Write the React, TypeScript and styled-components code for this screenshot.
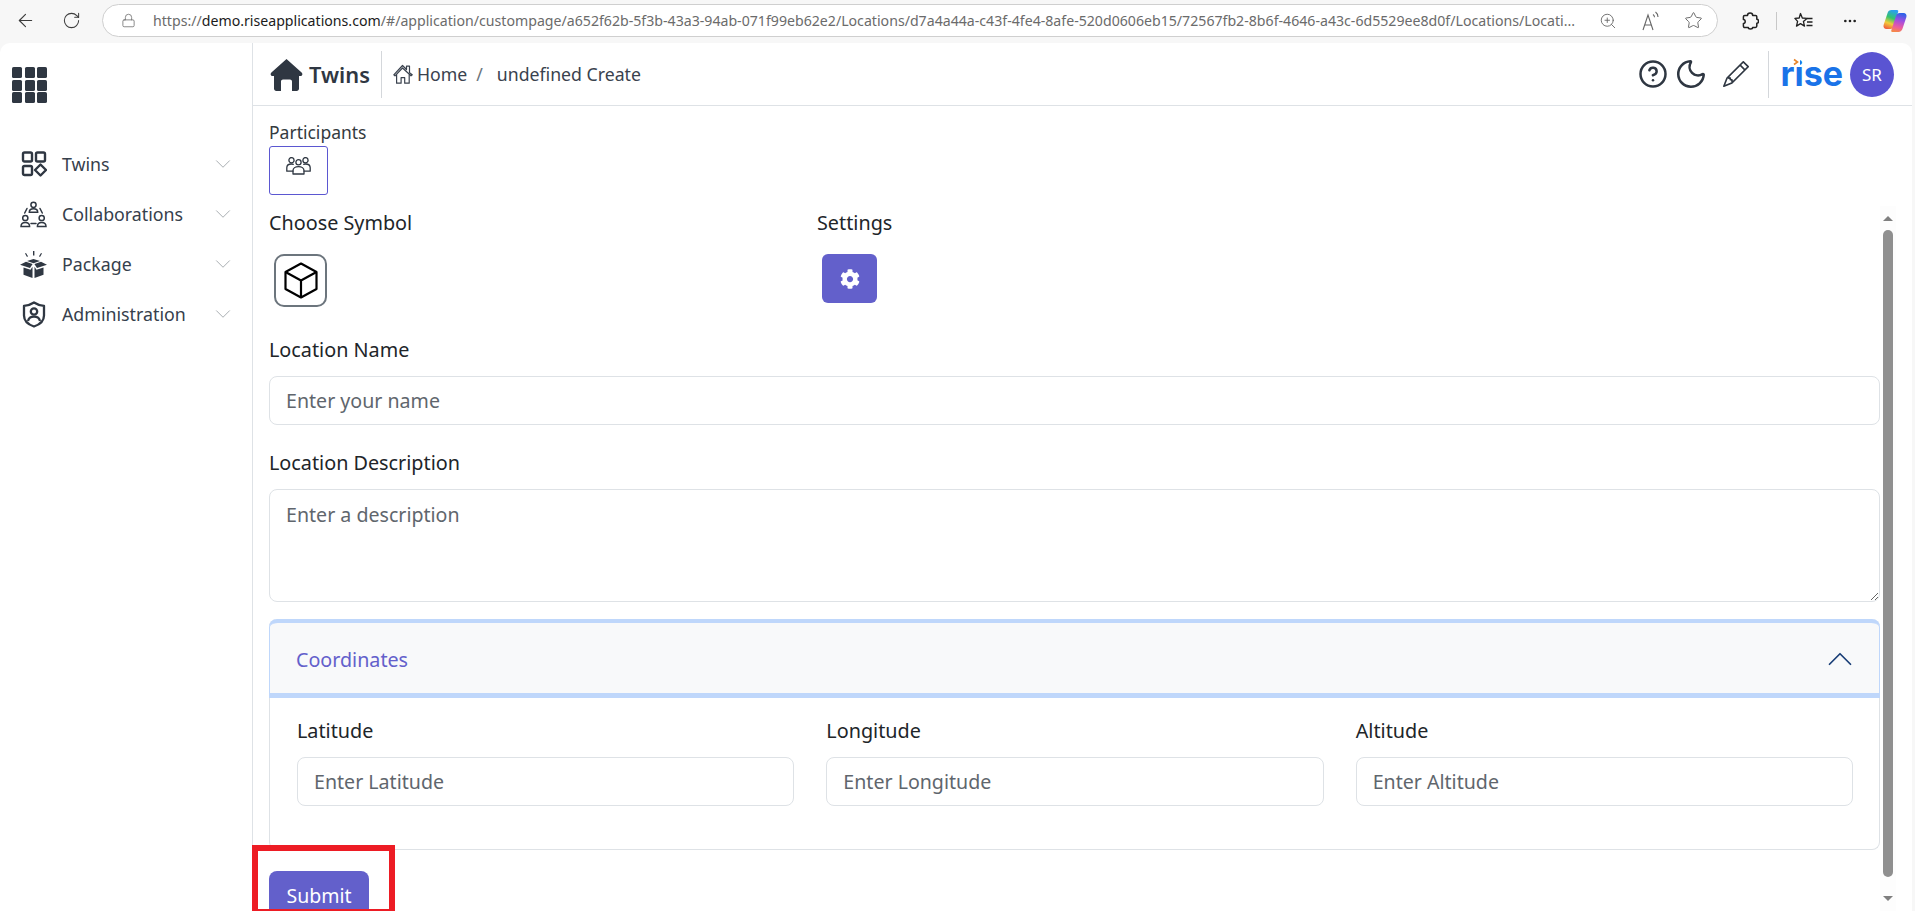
import styled, { createGlobalStyle } from "styled-components"
import { ArrowLeft, RotateCw, Lock, ZoomIn, Star, MoreHorizontal, CircleHelp, Moon, ChevronDown, ChevronUp } from "lucide-react"
import { BsPencil } from "react-icons/bs"
import { FaCog } from "react-icons/fa"

const UI_FONT = `"Noto Sans", "Open Sans", sans-serif`
const DARK = "#2f3742"
const PURPLE = "#6360cb"
const LINE = "#dee2e6"

const GlobalStyle = createGlobalStyle`
    html, body, #root {
        margin: 0;
        height: 100%;
        overflow: hidden;
    }
    body {
        background: #f7f7f7;
        font-family: ${UI_FONT};
        color: #212529;
    }
    * { box-sizing: border-box; }
`

const Page = styled.div`
    position: relative;
    height: 100vh;
    display: flex;
    flex-direction: column;
    overflow: hidden;
`

/* browser toolbar */
const BrowserBar = styled.div`
    height: 43px;
    flex: none;
    display: flex;
    align-items: flex-start;
    padding-top: 4px;
`

const NavButtons = styled.div`
    width: 102px;
    height: 33px;
    flex: none;
    display: flex;
    align-items: center;
    gap: 26px;
    padding-left: 15px;
    color: #3c3c3c;
`

const AddressBar = styled.div`
    flex: 1;
    min-width: 0;
    height: 33px;
    display: flex;
    align-items: center;
    padding: 0 14px 0 18px;
    background: #fff;
    border: 1px solid #cfcfcf;
    border-radius: 17px;
    color: #666;
`

const Url = styled.div`
    flex: 1;
    margin-left: 17px;
    font-size: 14.15px;
    white-space: nowrap;
    overflow: hidden;
    color: #6b6b6b;
    b { font-weight: 400; color: #1b1b1b; }
`

const AddressIcons = styled.div`
    display: flex;
    align-items: center;
    gap: 25px;
`

const Tools = styled.div`
    width: 197px;
    height: 33px;
    flex: none;
    display: flex;
    align-items: center;
    padding-left: 24px;
    color: #222;
`

const ToolDivider = styled.div`
    width: 1px;
    height: 18px;
    margin: 0 17px;
    background: #c8c8c8;
`

const ToolGap = styled.div<{ $w: number }>`
    width: ${({ $w }) => $w}px;
`

/* app panel */
const Panel = styled.div`
    flex: 1;
    min-height: 0;
    display: flex;
    margin-right: 3px;
    background: #fff;
    border-radius: 10px 10px 0 0;
    overflow: hidden;
`

const Sidebar = styled.aside`
    width: 253px;
    flex: none;
    border-right: 1px solid ${LINE};
    padding: 24px 16px 0 0;
`

const Apps = styled.div`
    margin-left: 12px;
    height: 36px;
    color: ${DARK};
`

const Nav = styled.nav`
    margin-top: 36px;
`

const NavRow = styled.div`
    height: 50px;
    display: flex;
    align-items: center;
    padding-left: 20px;
    color: ${DARK};
`

const NavIcon = styled.div`
    width: 27px;
    height: 27px;
    flex: none;
    display: flex;
    align-items: center;
    justify-content: center;
`

const NavLabel = styled.span`
    flex: 1;
    margin-left: 15px;
    font-size: 17.8px;
    color: #36404c;
`

const Main = styled.main`
    flex: 1;
    min-width: 0;
    display: flex;
    flex-direction: column;
`

const Header = styled.header`
    height: 63px;
    flex: none;
    display: flex;
    align-items: center;
    padding: 0 18px 0 17px;
    border-bottom: 1px solid ${LINE};
`

const Brand = styled.div`
    display: flex;
    align-items: center;
    gap: 6px;
    height: 47px;
    padding-right: 11px;
    border-right: 1px solid #d4d7db;
    color: ${DARK};
    font-size: 21.8px;
    font-weight: 600;
`

const Crumbs = styled.div`
    flex: 1;
    display: flex;
    align-items: center;
    padding-left: 11px;
    font-size: 17.7px;
    color: #3a424e;
`

const CrumbHome = styled.span`
    margin-left: 4px;
`

const CrumbSep = styled.span`
    margin: 0 14px 0 9px;
    color: #6c757d;
`

const HeaderIcons = styled.div`
    display: flex;
    align-items: center;
    color: ${DARK};
`

const HelpSlot = styled.div`
    display: flex;
    margin-right: 6px;
`

const MoonSlot = styled.div`
    display: flex;
    margin-right: 15px;
`

const LogoArea = styled.div`
    display: flex;
    align-items: center;
    height: 47px;
    margin-left: 19px;
    padding-left: 11px;
    border-left: 1px solid #d4d7db;
`

const Logo = styled.div`
    position: relative;
    font-family: "Inter", sans-serif;
    font-size: 34px;
    font-weight: 700;
    color: #1a73e8;
    line-height: 1;
    margin-right: 7px;
`

const LogoDot = styled.svg`
    position: absolute;
    left: 12px;
    top: 1px;
    background: #fff;
`

const Avatar = styled.div`
    width: 44px;
    height: 45px;
    border-radius: 50%;
    background: #5a54d2;
    color: #fff;
    display: flex;
    align-items: center;
    justify-content: center;
    font-size: 17px;
`

const Participants = styled.section`
    height: 100px;
    flex: none;
    padding: 14px 0 0 16px;
`

const SmallLabel = styled.div`
    font-size: 17.5px;
    line-height: 25px;
    color: #343a40;
`

const PeopleBox = styled.div`
    width: 59px;
    height: 49px;
    margin-top: 1px;
    padding-bottom: 9px;
    display: flex;
    align-items: center;
    justify-content: center;
    border: 1px solid #5b57d1;
    border-radius: 3px;
    color: ${DARK};
`

const ScrollRow = styled.div`
    flex: 1;
    min-height: 0;
    display: flex;
    padding-right: 16px;
`

const FormArea = styled.div`
    flex: 1;
    min-width: 0;
    overflow: hidden;
    padding: 3px 0 0 16px;
`

const Lane = styled.div`
    width: 16px;
    flex: none;
    display: flex;
    flex-direction: column;
    align-items: center;
    background: #fdfdfd;
`

const Arrow = styled.div<{ $down?: boolean }>`
    flex: none;
    width: 0;
    height: 0;
    margin: ${({ $down }) => ($down ? "19px 0 0" : "10px 0 9px")};
    border-left: 5px solid transparent;
    border-right: 5px solid transparent;
    ${({ $down }) => ($down ? "border-top: 5px solid #7f7f7f;" : "border-bottom: 5px solid #7f7f7f;")}
`

const Thumb = styled.div`
    width: 10px;
    height: 647px;
    flex: none;
    border-radius: 5px;
    background: #8f8f8f;
`

const SymbolRow = styled.div`
    display: grid;
    grid-template-columns: 548px 1fr;
`

const FieldLabel = styled.label`
    display: block;
    font-size: 19.8px;
    line-height: 28px;
    color: #212529;
`

const SymbolSlot = styled.div`
    margin: 17px 0 0 5px;
`

const CubeBox = styled.div`
    width: 53px;
    height: 53px;
    display: flex;
    align-items: center;
    justify-content: center;
    border: 2px solid #6c757d;
    border-radius: 10px;
    color: #000;
`

const GearButton = styled.button`
    width: 55px;
    height: 49px;
    display: flex;
    align-items: center;
    justify-content: center;
    border: 0;
    border-radius: 6px;
    background: ${PURPLE};
    color: #fff;
`

const Field = styled.div<{ $top: number }>`
    margin-top: ${({ $top }) => $top}px;
`

const TextInput = styled.input`
    display: block;
    width: 100%;
    height: 49px;
    margin-top: 12px;
    padding: 0 16px;
    font-family: ${UI_FONT};
    font-size: 19.6px;
    color: #212529;
    background: #fff;
    border: 1px solid ${LINE};
    border-radius: 8px;
    outline: 0;
    &::placeholder { color: #5f666d; opacity: 1; }
`

const TextArea = styled.textarea`
    display: block;
    width: 100%;
    height: 113px;
    margin-top: 12px;
    padding: 11px 16px;
    font-family: ${UI_FONT};
    font-size: 19.6px;
    line-height: 27px;
    background: #fff;
    border: 1px solid ${LINE};
    border-radius: 8px;
    outline: 0;
    resize: vertical;
    &::placeholder { color: #5f666d; opacity: 1; }
`

const Accordion = styled.div`
    margin-top: 17px;
    border: 1px solid ${LINE};
    border-top: 0;
    border-radius: 8px;
`

const AccordionHead = styled.div`
    height: 79px;
    display: flex;
    align-items: center;
    justify-content: space-between;
    padding: 2px 19px 0 27px;
    background: #f8f9fa;
    border-top: 4px solid #bfd7fb;
    border-bottom: 5px solid #bfd7fb;
    box-shadow: inset 1px 0 #bfd7fb, inset -1px 0 #bfd7fb;
    border-radius: 8px 8px 0 0;
    margin: 0 -1px;
    font-size: 19.7px;
    color: ${PURPLE};
`

const AccordionBody = styled.div`
    display: grid;
    grid-template-columns: repeat(3, 1fr);
    gap: 32px;
    padding: 19px 26px 43px 27px;
`

const SubmitButton = styled.button`
    display: block;
    width: 100px;
    height: 49px;
    margin-top: 21px;
    border: 0;
    border-radius: 8px;
    background: ${PURPLE};
    color: #fff;
    font-family: ${UI_FONT};
    font-size: 19.5px;
`

const Annotation = styled.div`
    position: absolute;
    left: 252px;
    top: 845px;
    width: 143px;
    height: 70px;
    border: 6px solid #ed1c24;
    pointer-events: none;
`

function HomeSolid() {
    return (
        <svg width="33" height="33" viewBox="0 0 33 33" fill="currentColor">
            <path d="M16.5 1 31.6 14.6c1.500 1.400.6 3.400-1.200 3.400H29v12.500c0 1.400-1 2.500-2.400 2.500H22V23.500c0-1.200-.9-2-2-2h-7c-1.100 0-2 .8-2 2V33H6.400C5 33 4 31.900 4 30.500V18H2.600c-1.800 0-2.700-2-1.200-3.400z" />
        </svg>
    )
}

function HomeOutline() {
    return (
        <svg width="20" height="20" viewBox="0 0 20 20" fill="none" stroke="currentColor" strokeWidth="1.200" strokeLinejoin="round">
            <path d="M.8 10.800 9.500 1.500l4 4V2.200h3v6.400l2.700 2.200-1.200 1L9.500 4 2 11.800z" />
            <path d="M3.600 10.500v8.700h4.500v-5.500h3.600v5.500h4.500v-8.700" />
        </svg>
    )
}

function AppsIcon() {
    const cells = [0, 13, 25]
    return (
        <svg width="35" height="36" viewBox="0 0 35 36" fill="currentColor">
            {cells.map((y) => cells.map((x) => <rect key={`${x}-${y}`} x={x} y={y} width="10" height="11" rx="1.6" />))}
        </svg>
    )
}

function TwinsIcon() {
    return (
        <svg width="26" height="26" viewBox="0 0 26 26" fill="none" stroke="currentColor" strokeWidth="2.4" strokeLinejoin="round">
            <rect x="2" y="1.5" width="9" height="9" rx="1.5" />
            <rect x="15" y="1.5" width="9" height="9" rx="1.5" />
            <rect x="2" y="15" width="9" height="9" rx="1.5" />
            <path d="M19.5 13.500 25 19l-5.500 5.500L14 19z" />
        </svg>
    )
}

function CollabIcon() {
    return (
        <svg width="27" height="27" viewBox="0 0 27 27" fill="none" stroke="currentColor" strokeWidth="1.5" strokeLinecap="round">
            <circle cx="13.500" cy="3.800" r="2.600" />
            <path d="M9.300 11.200c0-2 1.800-3.400 4.200-3.400s4.200 1.400 4.200 3.400z" />
            <circle cx="5.300" cy="17" r="2.600" />
            <path d="M1 25.500c0-2.400 1.800-4 4.300-4s4.300 1.600 4.300 4z" />
            <circle cx="21.700" cy="17" r="2.600" />
            <path d="M17.400 25.500c0-2.400 1.800-4 4.300-4s4.300 1.600 4.300 4z" />
            <path d="M11 22.500h5M7 7.500l-2.300 4.500M20 7.500l2.300 4.500" />
        </svg>
    )
}

function PackageIcon() {
    return (
        <svg width="27" height="27" viewBox="0 0 27 27" fill="currentColor" stroke="none">
            <path d="M6 2l2 3.300-1 .6-2-3.300zM13 0h1.400v4.500H13zM21 2l1 .6-2 3.300-1-.6z" />
            <path d="M13.500 8 20 10l-6.500 2.200L7 10zM6 10.700l6.600 2.300-2.600 4L0 13.800zM21 10.700 27 13.800 17 17l-2.600-4zM3.500 16.500l7 2.200 2-3V27l-9-3.200zM23.500 16.500v7.300l-9 3.200V15.700l2 3z" />
        </svg>
    )
}

function ShieldIcon() {
    return (
        <svg width="26" height="27" viewBox="0 0 26 27" fill="none" stroke="currentColor" strokeWidth="2.300" strokeLinejoin="round">
            <path d="M13 1.500c3 2 6 3 10 3.300v9.700c0 5-4 9-10 11-6-2-10-6-10-11V4.800c4-.3 7-1.300 10-3.300z" />
            <circle cx="13" cy="10.500" r="3.200" />
            <path d="M7 20c.6-2.800 3-4.300 6-4.300s5.400 1.500 6 4.300" />
        </svg>
    )
}

function PeopleIcon() {
    return (
        <svg width="25" height="18" viewBox="0 0 25 18" fill="none" stroke="currentColor" strokeWidth="1.300" strokeLinejoin="round">
            <circle cx="5.500" cy="3.200" r="2.600" />
            <circle cx="19.500" cy="3.200" r="2.600" />
            <circle cx="12.500" cy="5.200" r="2.600" />
            <path d="M7.500 14.200H.8v-3.500c0-2.300 2-3.700 4.700-3.700 1 0 1.700.2 2.300.5M17.500 14.200h6.700v-3.500c0-2.300-2-3.700-4.700-3.700-1 0-1.700.2-2.300.5" />
            <path d="M7 17v-3.400c0-2.300 2.300-4 5.500-4s5.500 1.700 5.500 4V17z" />
        </svg>
    )
}

function CubeIcon() {
    return (
        <svg width="34" height="37" viewBox="0 0 34 37" fill="none" stroke="currentColor" strokeWidth="2.200" strokeLinejoin="round">
            <path d="M17 1.500 32.500 10v17L17 35.500 1.500 27V10z" />
            <path d="M1.500 10 17 18.500 32.500 10M17 18.500v17" />
        </svg>
    )
}

function ReadAloudIcon() {
    return (
        <svg width="17" height="20" viewBox="0 0 17 20" fill="none" stroke="currentColor" strokeWidth="1.100">
            <path d="M1 19 6 4l5 15M2.800 14h6.400M11 3.500c1 .7 1.500 1.600 1.500 2.800M13.500 1c1.600 1.200 2.500 3 2.500 5" />
        </svg>
    )
}

function ExtensionIcon() {
    return (
        <svg width="17" height="18" viewBox="0 0 17 18" fill="none" stroke="currentColor" strokeWidth="1.500" strokeLinejoin="round">
            <path d="M5.500 3.500c0-1.500 1.200-2.500 2.600-2.500s2.600 1 2.600 2.500h2.800c.8 0 1.300.6 1.300 1.300v2.400c1 0 1.700.9 1.700 2s-.7 2-1.700 2v2.900c0 .8-.6 1.400-1.400 1.400h-2.800c0 1-.9 1.500-2.100 1.500s-2.200-.5-2.200-1.500H2.800c-.8 0-1.400-.6-1.400-1.400v-2.500c1 0 1.800-.9 1.800-2s-.8-2.200-1.800-2.200V4.800c0-.8.600-1.300 1.400-1.300z" />
        </svg>
    )
}

function FavoritesIcon() {
    return (
        <svg width="19" height="18" viewBox="0 0 19 18" fill="none" stroke="currentColor" strokeWidth="1.300" strokeLinejoin="round">
            <path d="M6.500 1.500 8.300 6l4.700.4-3.600 3 1.100 4.700-4-2.500-4 2.500 1.100-4.700L.9 6.400 5.200 6z" />
            <path d="M13 6.500h5.500M13 10h5.500M12.500 13.500h6" />
        </svg>
    )
}

function CopilotIcon() {
    return (
        <svg width="24" height="24" viewBox="0 0 24 24">
            <defs>
                <linearGradient id="copA" x1="0.6" y1="0" x2="0.3" y2="1">
                    <stop offset="0" stopColor="#2b9ff0" />
                    <stop offset="0.4" stopColor="#35c46d" />
                    <stop offset="0.7" stopColor="#f2cc3a" />
                    <stop offset="1" stopColor="#f0603f" />
                </linearGradient>
                <linearGradient id="copB" x1="0.6" y1="0" x2="0.4" y2="1">
                    <stop offset="0" stopColor="#2a62e8" />
                    <stop offset="0.4" stopColor="#a24ee0" />
                    <stop offset="0.75" stopColor="#ec5ba0" />
                    <stop offset="1" stopColor="#f5884a" />
                </linearGradient>
            </defs>
            <path d="M8.500 1H14c1 0 1.500.8 1.200 1.800L11 17c-.7 2-1.800 3-3.800 3H3.500C1.200 20 0 18.200.6 16L4.500 4.200C5.100 2.200 6.500 1 8.500 1z" fill="url(#copA)" />
            <path d="M15.500 23h-6c-1 0-1.500-.8-1.200-1.800L13 7c.7-2 1.800-3 3.800-3h3.700c2.300 0 3.500 1.800 2.900 4L19.500 19.800C18.900 21.800 17.500 23 15.500 23z" fill="url(#copB)" />
        </svg>
    )
}

const menuItems = [
    { label: "Twins", icon: <TwinsIcon /> },
    { label: "Collaborations", icon: <CollabIcon /> },
    { label: "Package", icon: <PackageIcon /> },
    { label: "Administration", icon: <ShieldIcon /> },
]

export default function App() {
    return (
        <Page>
            <GlobalStyle />
            <BrowserBar>
                <NavButtons>
                    <ArrowLeft size={21} strokeWidth={1.3} />
                    <RotateCw size={19} strokeWidth={1.3} />
                </NavButtons>
                <AddressBar>
                    <Lock size={15} strokeWidth={1.2} />
                    <Url>
                        https://<b>demo.riseapplications.com</b>/#/application/custompage/a652f62b-5f3b-43a3-94ab-071f99eb62e2/Locations/d7a4a44a-c43f-4fe4-8afe-520d0606eb15/72567fb2-8b6f-4646-a43c-6d5529ee8d0f/Locations/Locati...
                    </Url>
                    <AddressIcons>
                        <ZoomIn size={18} strokeWidth={1.2} />
                        <ReadAloudIcon />
                        <Star size={19} strokeWidth={1.2} />
                    </AddressIcons>
                </AddressBar>
                <Tools>
                    <ExtensionIcon />
                    <ToolDivider />
                    <FavoritesIcon />
                    <ToolGap $w={29} />
                    <MoreHorizontal size={16} strokeWidth={2} />
                    <ToolGap $w={25} />
                    <CopilotIcon />
                </Tools>
            </BrowserBar>
            <Panel>
                <Sidebar>
                    <Apps><AppsIcon /></Apps>
                    <Nav>
                        {menuItems.map((item) => (
                            <NavRow key={item.label}>
                                <NavIcon>{item.icon}</NavIcon>
                                <NavLabel>{item.label}</NavLabel>
                                <ChevronDown size={26} strokeWidth={0.7} color="#8f959b" />
                            </NavRow>
                        ))}
                    </Nav>
                </Sidebar>
                <Main>
                    <Header>
                        <Brand>
                            <HomeSolid />
                            Twins
                        </Brand>
                        <Crumbs>
                            <HomeOutline />
                            <CrumbHome>Home</CrumbHome>
                            <CrumbSep>/</CrumbSep>
                            undefined Create
                        </Crumbs>
                        <HeaderIcons>
                            <HelpSlot><CircleHelp size={30} strokeWidth={2} /></HelpSlot>
                            <MoonSlot><Moon size={34} strokeWidth={1.8} /></MoonSlot>
                            <BsPencil size={26} />
                        </HeaderIcons>
                        <LogoArea>
                            <Logo>
                                rise
                                <LogoDot width="8" height="8" viewBox="0 0 8 8" fill="none" stroke="#e8852b" strokeWidth="1.600">
                                    <path d="M2 1.500 5.500 4 2 6.500" />
                                </LogoDot>
                            </Logo>
                            <Avatar>SR</Avatar>
                        </LogoArea>
                    </Header>
                    <Participants>
                        <SmallLabel>Participants</SmallLabel>
                        <PeopleBox><PeopleIcon /></PeopleBox>
                    </Participants>
                    <ScrollRow>
                        <FormArea>
                            <SymbolRow>
                                <div>
                                    <FieldLabel>Choose Symbol</FieldLabel>
                                    <SymbolSlot><CubeBox><CubeIcon /></CubeBox></SymbolSlot>
                                </div>
                                <div>
                                    <FieldLabel>Settings</FieldLabel>
                                    <SymbolSlot><GearButton><FaCog size={20} /></GearButton></SymbolSlot>
                                </div>
                            </SymbolRow>
                            <Field $top={29}>
                                <FieldLabel>Location Name</FieldLabel>
                                <TextInput placeholder="Enter your name" />
                            </Field>
                            <Field $top={24}>
                                <FieldLabel>Location Description</FieldLabel>
                                <TextArea placeholder="Enter a description" />
                            </Field>
                            <Accordion>
                                <AccordionHead>
                                    Coordinates
                                    <ChevronUp size={42} strokeWidth={1} color="#1a3f77" />
                                </AccordionHead>
                                <AccordionBody>
                                    <div>
                                        <FieldLabel>Latitude</FieldLabel>
                                        <TextInput placeholder="Enter Latitude" />
                                    </div>
                                    <div>
                                        <FieldLabel>Longitude</FieldLabel>
                                        <TextInput placeholder="Enter Longitude" />
                                    </div>
                                    <div>
                                        <FieldLabel>Altitude</FieldLabel>
                                        <TextInput placeholder="Enter Altitude" />
                                    </div>
                                </AccordionBody>
                            </Accordion>
                            <SubmitButton>Submit</SubmitButton>
                        </FormArea>
                        <Lane>
                            <Arrow />
                            <Thumb />
                            <Arrow $down />
                        </Lane>
                    </ScrollRow>
                </Main>
            </Panel>
            <Annotation />
        </Page>
    )
}
